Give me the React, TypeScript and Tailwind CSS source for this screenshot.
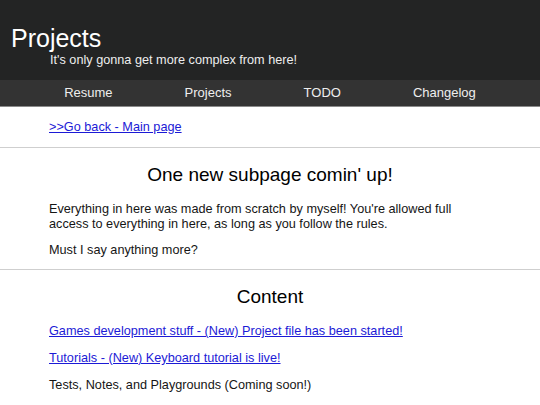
import React from 'react';

const navItems = ['Resume', 'Projects', 'TODO', 'Changelog'];

export default function App() {
  return (
    <div className="min-h-screen bg-white font-['Liberation_Sans',Arial,sans-serif] text-[#151515]">
      {/* Header */}
      <header className="h-[80px] bg-[#232424] pl-[11px] pt-[23px] text-white">
        <h1 className="text-[25px] leading-[30px]">Projects</h1>
        <p className="pl-[39px] text-[12.7px] leading-[15px] text-[#eee]">
          It's only gonna get more complex from here!
        </p>
      </header>

      {/* Nav */}
      <nav className="flex h-[27px] items-center justify-center border-b border-[#8a8a8a] bg-[#333333] text-[13px] text-[#eee]">
        {navItems.map((item) => (
          <a key={item} className="px-[36px]">
            {item}
          </a>
        ))}
      </nav>

      <div className="px-[49px] pt-[13px] pb-[12px] text-[12.7px] leading-[15px]">
        <a href="#" className="text-[#1c1ad6] underline">
          &gt;&gt;Go back - Main page
        </a>
      </div>
      <hr className="border-[#cfcfcf]" />

      <section className="px-[49px] pt-[16px] pb-[11px] text-[12.7px] leading-[15px]">
        <h2 className="text-center text-[19px] leading-[22px] text-black">One new subpage comin' up!</h2>
        <p className="mt-[16px] max-w-[420px]">
          Everything in here was made from scratch by myself! You're allowed full access to everything in here, as long
          as you follow the rules.
        </p>
        <p className="mt-[11px]">Must I say anything more?</p>
      </section>
      <hr className="border-[#cfcfcf]" />

      <section className="px-[49px] pt-[16px] text-[12.7px] leading-[15px]">
        <h2 className="text-center text-[19px] leading-[22px] text-black">Content</h2>
        <ul className="mt-[16px] flex flex-col gap-[12px]">
          <li>
            <a href="#" className="text-[#1c1ad6] underline">
              Games development stuff - (New) Project file has been started!
            </a>
          </li>
          <li>
            <a href="#" className="text-[#1c1ad6] underline">
              Tutorials - (New) Keyboard tutorial is live!
            </a>
          </li>
          <li>Tests, Notes, and Playgrounds (Coming soon!)</li>
        </ul>
      </section>
    </div>
  );
}
